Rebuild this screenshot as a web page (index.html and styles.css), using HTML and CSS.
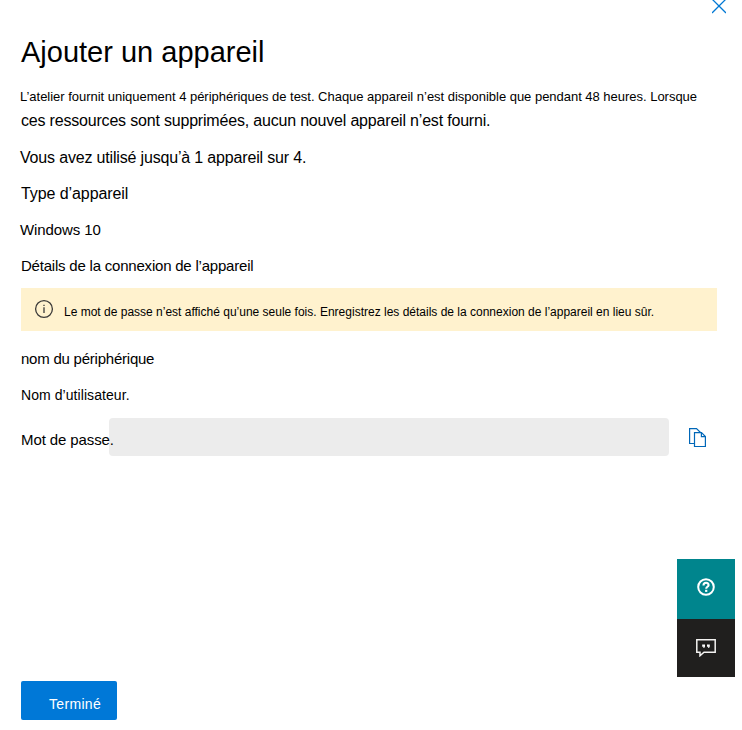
FILE: index.html
```
<!DOCTYPE html>
<html lang="fr">
<head>
<meta charset="utf-8">
<title>Ajouter un appareil</title>
<link rel="stylesheet" href="styles.css">
</head>
<body>
<main class="panel">
  <button class="close" aria-label="Fermer"><svg width="14" height="14" viewBox="0 0 14 14"><path d="M0 -1L14 13M14 -1L0 13" fill="none" stroke="#0078d4" stroke-width="1.3"/></svg></button>
  <h1 class="title"><span>Ajouter un appareil</span></h1>
  <p class="intro"><span class="intro-small">L’atelier fournit uniquement 4 périphériques de test. Chaque appareil n’est disponible que pendant 48 heures. Lorsque</span><span class="intro-large">ces ressources sont supprimées, aucun nouvel appareil n’est fourni.</span></p>
  <p class="row usage"><span>Vous avez utilisé jusqu’à 1 appareil sur 4.</span></p>
  <p class="row type"><span>Type d’appareil</span></p>
  <p class="row os"><span>Windows 10</span></p>
  <p class="row details"><span>Détails de la connexion de l’appareil</span></p>
  <div class="notice">
    <svg class="info" width="20" height="20" viewBox="0 0 20 20"><circle cx="10" cy="10" r="8.4" fill="none" stroke="#3b3a39" stroke-width="1.3"/><path d="M10 8.3V14M10 5.8V7" stroke="#3b3a39" stroke-width="1.3"/></svg>
    <span class="notice-text">Le mot de passe n’est affiché qu’une seule fois. Enregistrez les détails de la connexion de l’appareil en lieu sûr.</span>
  </div>
  <p class="row device"><span>nom du périphérique</span></p>
  <p class="row user"><span>Nom d’utilisateur.</span></p>
  <div class="password">
    <span class="password-label">Mot de passe.</span>
    <div class="field"></div>
    <button class="copy" aria-label="Copier"><svg width="18" height="20" viewBox="0 0 18 20"><g fill="#fff" stroke="#0067b8" stroke-width="1.2"><path d="M5 15.5H.6V.6H7.5L11.5 4.5"/><path d="M5.5 4.6H12.5L16.4 8.5V18.5H5.5ZM12.4 4.8V8.6H16.3"/></g></svg></button>
  </div>
  <button class="done"><span>Terminé</span></button>
</main>
<aside class="support">
  <button class="help" aria-label="Aide"><svg width="18" height="18" viewBox="0 0 18 18"><circle cx="9" cy="9" r="7.8" fill="none" stroke="#fff" stroke-width="2"/><path d="M6.5 7.4C6.5 3.8 11.7 4 11.6 7.1C11.5 8.9 9.2 8.7 9.2 10.8" fill="none" stroke="#fff" stroke-width="2.1"/><path d="M8.1 11.8H10.3V13.9H8.1Z" fill="#fff"/></svg></button>
  <button class="feedback" aria-label="Commentaires"><svg width="20" height="18" viewBox="0 0 20 18"><path d="M.8.8H19.2V13.2H8L4 16.7V13.2H.8Z" fill="none" stroke="#f3f2f1" stroke-width="1.5"/><path d="M6.2 5.4H9V7.5L8.2 9H7.3L7.6 7.8H6.2ZM11 5.4H13.8V7.5L13 9H12.1L12.4 7.8H11Z" fill="#fff"/></svg></button>
</aside>
</body>
</html>
```
FILE: styles.css
```
* { box-sizing: border-box; }
body { margin: 0; background: #fff; color: #000; font-family: "Liberation Sans", Arial, sans-serif; }
button { border: 0; padding: 0; background: none; font: inherit; }
h1, p { margin: 0; font-weight: 400; white-space: nowrap; }
svg { display: block; }
.panel { position: relative; height: 730px; padding: 34px 25px 0 21px; }
.close { position: absolute; top: 0; left: 712px; }
.title { font-size: 29px; line-height: 36px; height: 51px; }
.intro { height: 55px; }
.intro span { display: block; width: max-content; line-height: 24px; }
.intro-small { font-size: 13px; margin-left: -1px; letter-spacing: -0.02px; }
.intro-large { font-size: 16px; letter-spacing: -0.19px; }
.row { height: 36px; line-height: 36px; }
.usage { font-size: 16px; margin-left: -1px; letter-spacing: -0.17px; }
.type { font-size: 16px; letter-spacing: -0.08px; }
.os { font-size: 15px; margin-left: -1px; letter-spacing: -0.1px; }
.details { font-size: 15px; letter-spacing: -0.21px; }
.notice { display: flex; height: 43px; margin-top: 4px; padding-left: 13px; background: #fff2ce; }
.info { margin-top: 11px; }
.notice-text { margin-left: 10px; padding-top: 4px; line-height: 40px; font-size: 12px; white-space: nowrap; }
.device { margin-top: 10px; font-size: 15px; letter-spacing: -0.23px; }
.user { font-size: 14px; letter-spacing: 0.07px; }
.password { display: flex; height: 38px; margin-top: 5px; }
.password-label { position: relative; z-index: 1; width: 88px; padding-top: 3px; font-size: 15px; line-height: 38px; letter-spacing: -0.1px; white-space: nowrap; }
.field { width: 560px; border-radius: 4px; background: #ececec; }
.copy { align-self: flex-start; margin: 10px 0 0 20px; }
.done { display: block; width: 96px; height: 39px; margin-top: 225px; padding: 7px 0 0 28px; border-radius: 2px; background: #0078d7; color: #fff; font-size: 14px; line-height: 30px; letter-spacing: 0.33px; text-align: left; }
.support { position: absolute; top: 559px; left: 677px; width: 58px; }
.support button { display: flex; width: 58px; justify-content: center; }
.help { height: 60px; padding-top: 19px; background: #00858d; }
.feedback { height: 58px; padding-top: 20px; background: #201f1e; }
```
